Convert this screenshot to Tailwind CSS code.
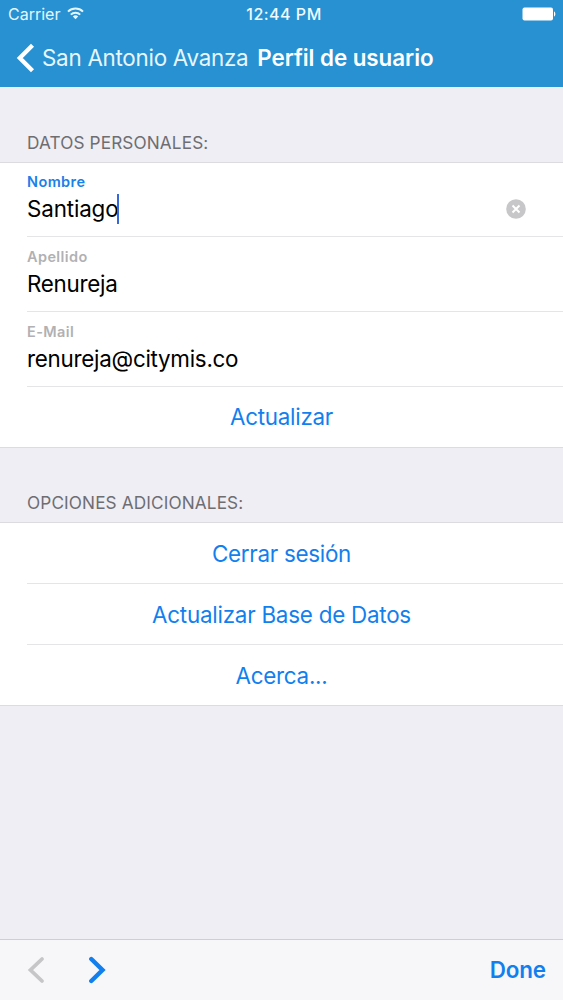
<!DOCTYPE html>
<html lang="es">
<head>
<meta charset="utf-8">
<title>Perfil de usuario</title>
<script src="https://cdn.jsdelivr.net/npm/@tailwindcss/browser@4"></script>
</head>
<body class="w-[563px] h-[1000px] overflow-hidden bg-[#efeef4] font-[Inter,sans-serif] text-[22.4px] tracking-[-0.27px] text-black flex flex-col whitespace-nowrap">
<header class="h-[87px] shrink-0 bg-[#2791d2] text-white flex flex-col">
  <div class="h-[28px] grid grid-cols-3 items-center pl-[8px] pr-[7px] text-[16px] leading-[28px] tracking-normal">
    <div class="flex items-center gap-[7px] text-[#e6f6fd]"><span>Carrier</span>
      <svg class="w-[17px] h-[13px] -mt-px" viewBox="0 0 17 13" fill="none" stroke="currentColor" stroke-width="2"><path d="M1 4.600a10.800 10.800 0 0 1 15 0M3.800 7.600a6.800 6.800 0 0 1 9.400 0"/><path d="M8.500 12.300l-2.700-2.800a3.900 3.900 0 0 1 5.400 0z" fill="currentColor" stroke="none"/></svg>
    </div>
    <span class="text-center font-medium tracking-[0.5px] pl-[4px] text-[#f0faff]">12:44 PM</span>
    <svg class="justify-self-end w-[34px] h-[14px]" viewBox="0 0 34 14" fill="currentColor"><rect x="0.500" y="0.500" width="30.500" height="13" rx="2"/><path d="M32 4.500c1.800.5 1.800 4.500 0 5z"/></svg>
  </div>
  <div class="h-[59px] flex items-center pl-[16px]">
    <svg class="w-[19px] h-[30px] mr-[7px]" viewBox="0 0 19 30" fill="none" stroke="currentColor" stroke-width="4.300"><path d="M16.500 2.300L3.800 15l12.700 12.700"/></svg>
    <span class="text-[#e6f6fd]">San Antonio Avanza</span>
    <span class="ml-[9px] font-semibold tracking-[-0.05px]">Perfil de usuario</span>
  </div>
</header>
<main class="grow flex flex-col">
  <h2 class="h-[75px] pl-[27px] pt-[44px] text-[17.2px] leading-[24px] tracking-[0.13px] text-[#6d6d72]">DATOS PERSONALES:</h2>
  <section class="h-[286px] bg-white border-y border-[#dcdbe0] flex flex-col">
    <div class="h-[74px] ml-[27px] border-b border-[#e5e5e7] flex items-center justify-between pr-[37px]">
      <div class="-mt-[2px]"><div class="text-[14.5px] leading-[20px] font-semibold tracking-[0.4px] text-[#1a80ea]">Nombre</div>
      <div class="leading-[34px] flex items-center tracking-[-0.15px]">Santiago<i class="-ml-px w-[2px] h-[30px] bg-[#3768d8]"></i></div></div>
      <svg class="w-[20px] h-[20px] mt-[18px]" viewBox="0 0 20 20"><circle cx="10" cy="10" r="9.800" fill="#c7c7c9"/><path d="M6.500 6.500l7 7m0-7l-7 7" stroke="#fff" stroke-width="2"/></svg>
    </div>
    <div class="h-[75px] ml-[27px] border-b border-[#e5e5e7] flex flex-col justify-center">
      <div class="text-[14.5px] leading-[20px] font-semibold tracking-[0.4px] text-[#b1b1b3]">Apellido</div>
      <div class="leading-[34px]">Renureja</div>
    </div>
    <div class="h-[75px] ml-[27px] border-b border-[#e5e5e7] flex flex-col justify-center pb-px">
      <div class="text-[14.5px] leading-[20px] font-semibold tracking-[0.4px] text-[#b1b1b3]">E-Mail</div>
      <div class="leading-[34px]">renureja@citymis.co</div>
    </div>
    <div class="grow flex items-center justify-center text-[#127fee]">Actualizar</div>
  </section>
  <h2 class="h-[74px] pl-[27px] pt-[43px] text-[17.2px] leading-[24px] tracking-[0.13px] text-[#6d6d72]">OPCIONES ADICIONALES:</h2>
  <section class="h-[184px] bg-white border-y border-[#dcdbe0] flex flex-col text-[#127fee]">
    <div class="h-[61px] ml-[27px] pr-[27px] pt-[2px] border-b border-[#e5e5e7] flex items-center justify-center">Cerrar sesión</div>
    <div class="h-[61px] ml-[27px] pr-[27px] pt-[2px] border-b border-[#e5e5e7] flex items-center justify-center tracking-[-0.23px]">Actualizar Base de Datos</div>
    <div class="grow flex items-center justify-center pt-[2px]">Acerca...</div>
  </section>
</main>
<footer class="h-[61px] shrink-0 bg-[#f7f6f9] border-t border-[#cfced3] flex items-center pl-[27px] pr-[17px]">
  <svg class="w-[18px] h-[28px]" viewBox="0 0 18 28" fill="none" stroke="#c6c6c8" stroke-width="3.800" stroke-linecap="round"><path d="M15 3L3.500 14L15 25"/></svg>
  <svg class="w-[18px] h-[28px] ml-[43px]" viewBox="0 0 18 28" fill="none" stroke="#127fee" stroke-width="4.400" stroke-linecap="round"><path d="M3.300 3L14.500 14L3.300 25"/></svg>
  <span class="ml-auto font-semibold tracking-[-0.1px] text-[#127fee]">Done</span>
</footer>
</body>
</html>
